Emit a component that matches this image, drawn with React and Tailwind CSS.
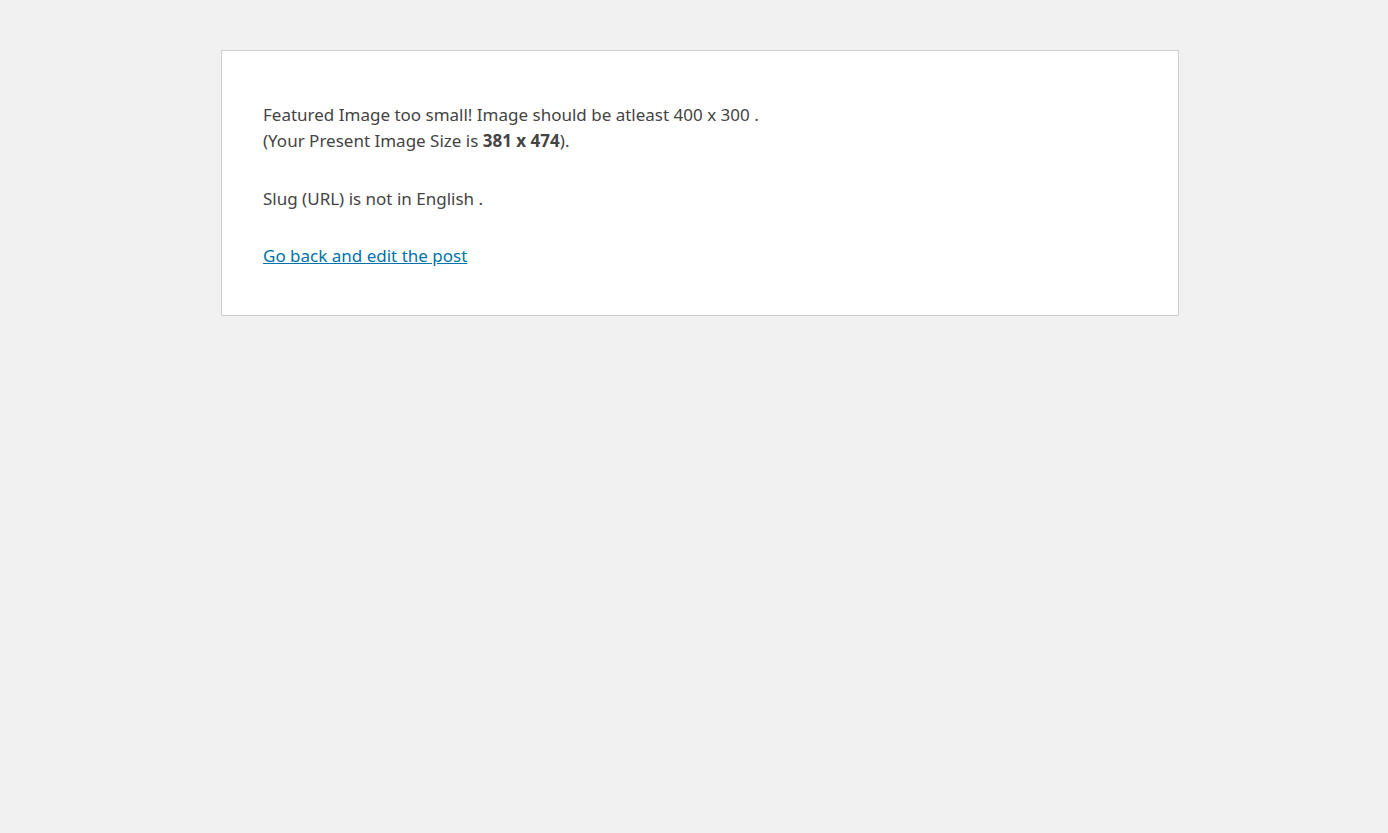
export default function App() {
  return (
    <div className="min-h-[833px] bg-[#f1f1f1] pt-[50px]" style={{}}>
      <div className="ml-[221px] w-[958px] border border-[#ccd0d4] bg-white pl-[41px] pr-10 pt-[51px] pb-[46px] text-[#444] text-[17px] leading-[26px] font-['Noto_Sans',sans-serif]">
        <p>
          Featured Image too small! Image should be atleast 400 x 300 .<br />
          (Your Present Image Size is <b>381 x 474</b>).
        </p>
        <p className="mt-8">Slug (URL) is not in English .</p>
        <p className="mt-[31px]">
          <a href="#" className="text-[#0073aa] underline">Go back and edit the post</a>
        </p>
      </div>
    </div>
  );
}
